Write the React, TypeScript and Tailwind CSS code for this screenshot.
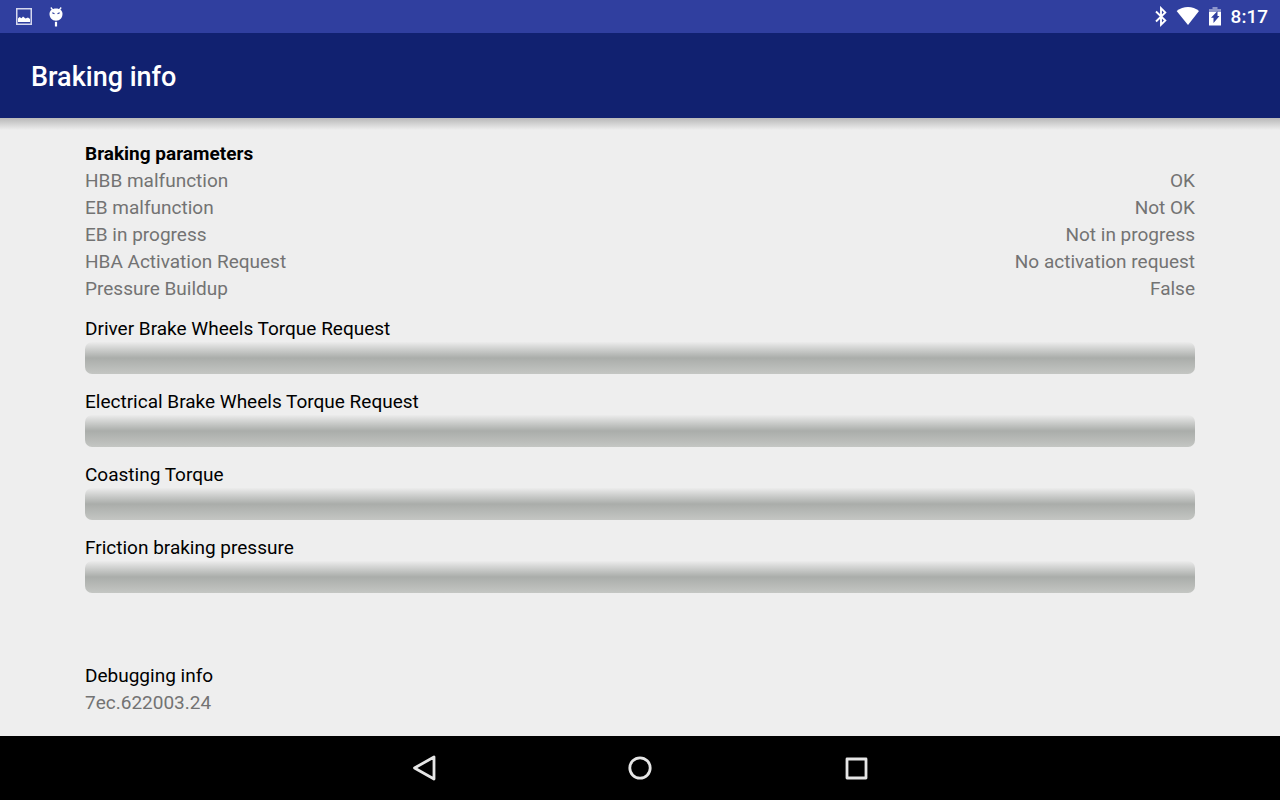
import { useId } from "react";

const parameters = [
  { name: "HBB malfunction", value: "OK" },
  { name: "EB malfunction", value: "Not OK" },
  { name: "EB in progress", value: "Not in progress" },
  { name: "HBA Activation Request", value: "No activation request" },
  { name: "Pressure Buildup", value: "False" },
];

const gauges = [
  "Driver Brake Wheels Torque Request",
  "Electrical Brake Wheels Torque Request",
  "Coasting Torque",
  "Friction braking pressure",
];

function StatusBar() {
  return (
    <div className="flex h-[33px] items-center justify-between bg-[#303f9f] pr-3 pl-4 text-white">
      <div className="flex items-center gap-4">
        <svg className="h-[17px] w-4" viewBox="0 0 16 17" aria-label="Screenshot saved">
          <rect x="0.75" y="0.75" width="14.5" height="15.5" fill="none" stroke="#d5d8ee" strokeWidth="1.5" />
          <path d="M2 14v-3.500L3.500 9l2 1.200L7 8.500l2.500 2L12 9.500l2 1.500v3z" fill="#fff" />
        </svg>
        <svg className="h-[21px] w-4" viewBox="0 0 16 21" aria-label="Debugging connected">
          <path d="M2.800 1.500l2 2.500M13.200 1.500l-2 2.500" stroke="#fff" strokeWidth="1.300" />
          <path d="M8 2.500c4 0 6.500 2.200 6.500 5.500 0 3.700-2.500 6.700-6.500 6.700S1.500 11.700 1.500 8C1.500 4.700 4 2.500 8 2.500z" fill="#fff" />
          <path d="M4.300 6.800l2.200 1M11.700 6.800l-2.200 1" stroke="#303f9f" strokeWidth="1.200" />
          <path d="M8 15.800v4.700" stroke="#fff" strokeWidth="2.200" />
        </svg>
      </div>
      <div className="flex items-center gap-[9px]">
        <svg className="h-[21px] w-3" viewBox="0 0 12 21" aria-label="Bluetooth">
          <path d="M1 5.500l9.300 9-4.300 4.200V2.200l4.300 4.300-9.300 9" fill="none" stroke="#fff" strokeWidth="1.900" />
        </svg>
        <svg className="h-[19px] w-[23px]" viewBox="0 0 23 19" aria-label="Wi-Fi">
          <path d="M12 18L0.600 4C4 1.300 8 0 12 0s7.800 1.300 11 4z" fill="#fff" />
        </svg>
        <svg className="h-[19px] w-[14px]" viewBox="0 0 14 19" aria-label="Battery charging">
          <path d="M4.500 0h5v2H13v3.500H1V2h3.500z" fill="#8d96cb" />
          <path d="M1 5h12v13.500H1z" fill="#fff" />
          <path d="M9.500 4v5h2L5.500 16v-5.200H3z" fill="#303f9f" />
        </svg>
        <time className="text-[19px] leading-6 font-medium">8:17</time>
      </div>
    </div>
  );
}

function Gauge({ label }: { label: string }) {
  const id = useId();
  return (
    <div className="flex flex-col">
      <label htmlFor={id} className="text-black">
        {label}
      </label>
      <progress
        id={id}
        value={0}
        max={100}
        className="block h-8 w-full appearance-none overflow-hidden rounded-[7px] bg-linear-to-b from-[#ececec] via-[#aaadaa] to-[#c4c6c3] [&::-webkit-progress-bar]:bg-transparent"
      />
    </div>
  );
}

export default function App() {
  return (
    <div className="flex min-h-screen flex-col bg-[#eeeeee] font-[Roboto,sans-serif]">
      <StatusBar />
      <header className="flex h-[85px] items-center bg-[#112170] px-[31px] pt-[2px]">
        <h1 className="text-[27px] leading-8 font-medium text-white">Braking info</h1>
      </header>
      <div className="h-3 bg-linear-to-b from-[#b9b9b9] to-[#eeeeee]" />

      <main className="flex grow flex-col px-[85px] pt-[10px] pb-5 text-[19px] leading-[27px] text-[#737373]">
        <h2 className="font-bold text-black">Braking parameters</h2>
        <dl>
          {parameters.map((p) => (
            <div key={p.name} className="flex justify-between">
              <dt>{p.name}</dt>
              <dd>{p.value}</dd>
            </div>
          ))}
        </dl>
        <div className="mt-[13px] flex flex-col gap-[14px]">
          {gauges.map((label) => (
            <Gauge key={label} label={label} />
          ))}
        </div>
        <section className="mt-auto">
          <h2 className="text-black">Debugging info</h2>
          <p>7ec.622003.24</p>
        </section>
      </main>

      <nav className="flex h-16 items-center justify-center gap-[184px] bg-black">
        <button type="button" aria-label="Back">
          <svg className="h-8 w-8" viewBox="0 0 32 32" fill="none" stroke="#e6e6e6" strokeWidth="2.800" strokeLinejoin="round">
            <path d="M26 5v22L6.500 16z" />
          </svg>
        </button>
        <button type="button" aria-label="Home">
          <svg className="h-8 w-8" viewBox="0 0 32 32" fill="none" stroke="#e6e6e6" strokeWidth="2.800">
            <circle cx="16" cy="16" r="10.200" />
          </svg>
        </button>
        <button type="button" aria-label="Recent apps">
          <svg className="h-8 w-8" viewBox="0 0 32 32" fill="none" stroke="#e6e6e6" strokeWidth="2.800" strokeLinejoin="round">
            <rect x="7" y="7" width="19" height="19" />
          </svg>
        </button>
      </nav>
    </div>
  );
}
